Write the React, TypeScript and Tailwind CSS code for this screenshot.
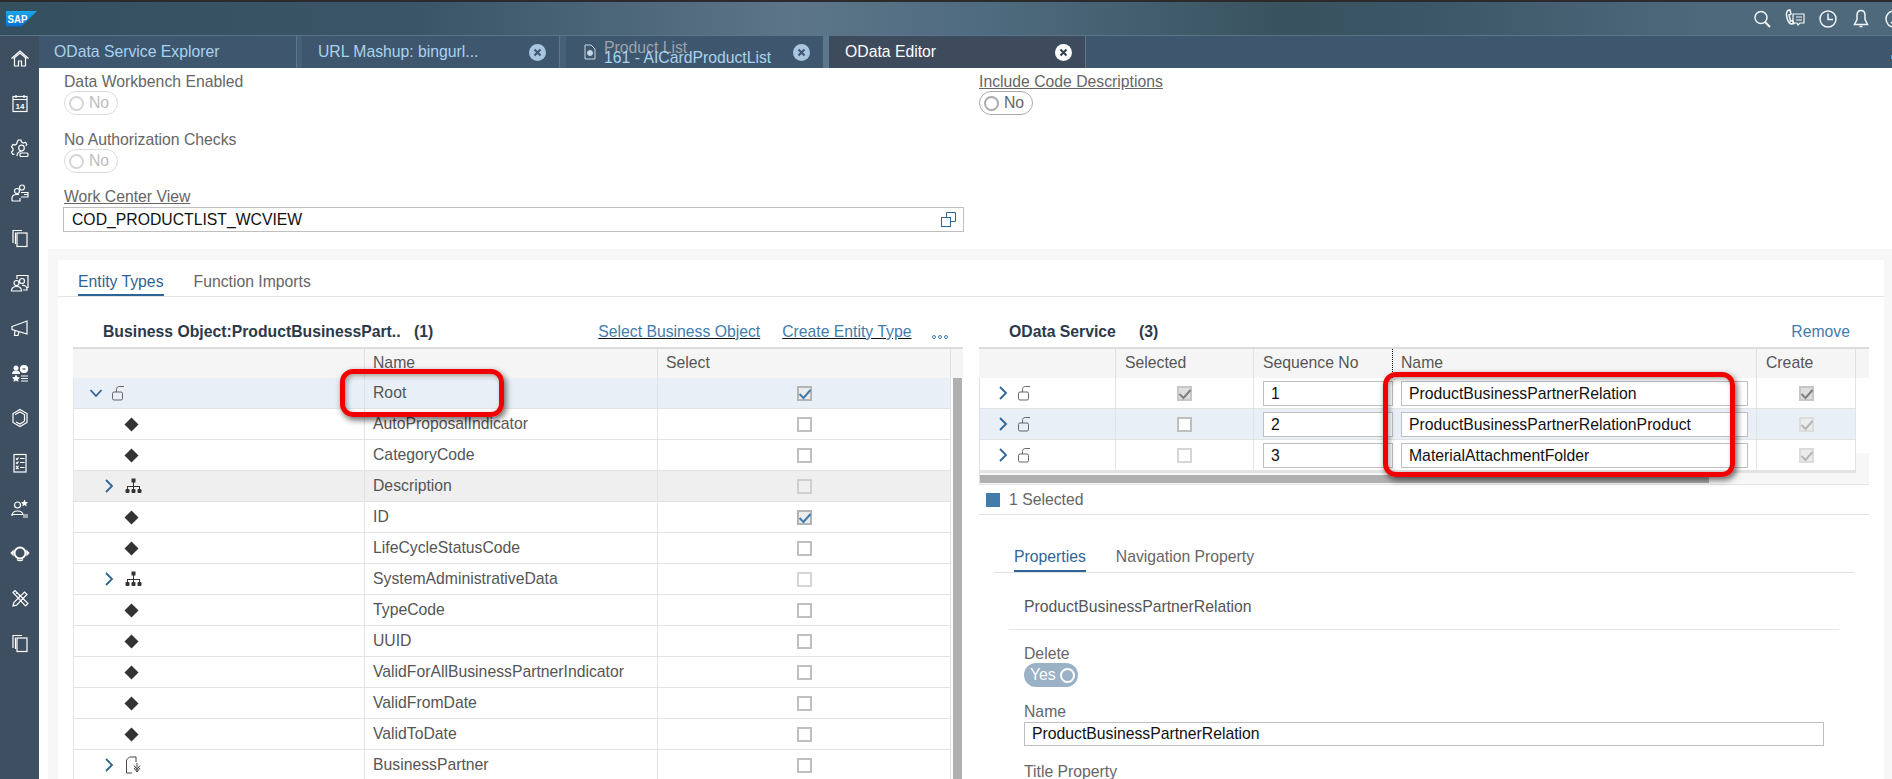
import type { ReactNode } from 'react'

const railIcons: ReactNode[] = [
  <><path d="M1.500 10.500 10 3l8.500 7.500" /><path d="M3.500 10.500 10 5l6.500 5.500" /><path d="M4.500 10v8h4v-5h3v5h4v-8" /></>,
  <><rect x="3" y="3.500" width="14" height="15" /><path d="M3 6.500h14M6 2v3M14 2v3" /><text x="10" y="16" fontSize="8" fontWeight="700" textAnchor="middle" fill="white" stroke="none">14</text></>,
  <><path d="M8 2h3l.5 2 2 1 2-.7 1.300 2.200-1 1.300M4.500 16l-1.500.500-1.500-2.500 1.500-1.500v-2L1.500 9 3 6.500 5 7l1.500-1L8 2" /><circle cx="11.500" cy="10" r="2.800" /><path d="M7 18c0-3 2-4.500 4.500-4.500" /><rect x="10" y="15" width="8" height="3.500" rx="1" /></>,
  <><circle cx="12" cy="4.500" r="2.500" /><circle cx="7" cy="8" r="2.500" /><path d="M2 18v-3c0-2 2-3.500 5-3.500h2M2 18h8v-3M11 9.500h7v4.500h-7M14 11.500h4" /></>,
  <><path d="M3 15V2.500h9" /><path d="M5.500 16V4.500" /><rect x="7" y="5" width="10" height="13.500" /></>,
  <><path d="M7 6V2.500h11v12h-2" /><circle cx="12" cy="8" r="2.500" /><circle cx="6.500" cy="10" r="2.500" /><path d="M1.500 18c0-3 2-4.500 5-4.500s5 1.500 5 4.500zM12 12.500c3-.5 5 1 5 3.500v1h-4" /></>,
  <><path d="M2 8.500 17 3v13L2 11.500zM5 12.500l-.5 5H8l1-4" /></>,
  <><g fill="white" stroke="none"><circle cx="6" cy="5" r="2.500" /><path d="M2 11c0-2.500 1.500-3.500 4-3.500s4 1 4 3.500z" /><path d="m6 11.500 1.300 2.600 2.700.4-2 1.900.5 2.600L6 17.500l-2.500 1.500.5-2.600-2-1.900 2.700-.4z" /></g><circle cx="14" cy="6" r="3.500" fill="white" /><path d="M12.500 6h3" stroke="#3d4f60" /><path d="M11 13h7M11 15.500h7M11 18h7" /></>,
  <><path d="M10 1.500 17 5.500v9l-7 4-7-4v-9z" /><path d="M5 6.500 10 4l4.500 2.500v7M14 13.500l-4 2.500-4-2" /></>,
  <><rect x="4" y="1.500" width="12" height="17.500" /><path d="M6 5.500l1 1 1.500-2M10 5.500h4.500M6 9.500l1 1 1.500-2M10 9.500h4.500M6 13l2.500 3M8.500 13 6 16M10 14.500h4.500" /></>,
  <><circle cx="7.500" cy="7" r="3" /><path d="M2 18c0-3.500 2.500-5 5.500-5s5 1 5.500 3.500H2z" /><path d="m14.500 1.500 1.100 2.400 2.400.3-1.800 1.700.5 2.500-2.200-1.300-2.200 1.300.5-2.500L11 4.200l2.400-.3z" fill="white" stroke="none" /><path d="M13 17h5M13 19h5" /></>,
  <><circle cx="10" cy="10" r="5.500" strokeWidth="2" /><path d="M3 8v4l-1.800-2zM17 8v4l1.800-2z" fill="white" /><path d="M7 16.500c1.500 1.500 4.500 1.500 6 0" /></>,
  <><path d="m3 18 .8-3.500L14.500 4l2.500 2.500L6.500 17.200z" /><path d="M3 4.500 5 2.500 18 15.500l-2.500 2.500z" /><path d="M6 5.500 7 4.500M9 8.500l1-1M12 11.500l1-1" /></>,
  <><path d="M3 15V2.500h9" /><path d="M5.500 16V4.500" /><rect x="7" y="5" width="10" height="13.500" /></>,
]

function TopIcon({ children }: { children: ReactNode }) {
  return (
    <div className="w-[33px] flex justify-center">
      <svg width="22" height="22" viewBox="0 0 22 22" fill="none" stroke="#f2f5f7" strokeWidth="1.500">
        {children}
      </svg>
    </div>
  )
}

function CloseIcon({ active }: { active?: boolean }) {
  return (
    <svg width="17" height="17" viewBox="0 0 17 17" className="shrink-0">
      <circle cx="8.500" cy="8.500" r="8.500" fill={active ? '#ffffff' : '#a9c6e0'} />
      <path d="m5.500 5.500 6 6m0-6-6 6" stroke={active ? '#33404f' : '#3f566f'} strokeWidth="2" />
    </svg>
  )
}

function Chevron({ open }: { open?: boolean }) {
  return (
    <svg width="14" height="14" viewBox="0 0 14 14" fill="none" stroke="#2f6497" strokeWidth="1.800">
      {open ? <path d="m1.500 4 5.500 6 5.500-6" /> : <path d="m4 1 6 6-6 6" />}
    </svg>
  )
}

function OpenLock() {
  return (
    <svg width="13" height="15" viewBox="0 0 13 15" fill="none" stroke="#555" strokeWidth="0.900">
      <rect x="0.500" y="6" width="10" height="8" rx="1.500" />
      <path d="M4.500 6V3.500C4.500 1.500 5.500.5 7.500.5h4.500" />
    </svg>
  )
}

function Diamond() {
  return (
    <svg width="15" height="15" viewBox="0 0 15 15">
      <path d="M7.500.5 14.500 7.500l-7 7-7-7z" fill="#333" />
    </svg>
  )
}

function Hierarchy() {
  return (
    <svg width="17" height="16" viewBox="0 0 17 16" fill="#333">
      <rect x="6.500" y="0.500" width="4" height="4" />
      <path d="M8 4h1v4h6v3h-1V9H9v2H8V9H3v2H2V8h6z" />
      <rect x="0.500" y="11" width="4" height="4" rx="1" />
      <rect x="6.500" y="11" width="4" height="4" rx="1" />
      <rect x="12.500" y="11" width="4" height="4" rx="1" />
    </svg>
  )
}

function DocDown() {
  return (
    <svg width="17" height="18" viewBox="0 0 17 18" fill="none" stroke="#444" strokeWidth="1">
      <path d="M7 17H1.500V4L4.500 1H11v5" />
      <path d="M12 7v9M9 12l3 4 3-4M9 9.500l3 4 3-4" />
    </svg>
  )
}

type BoxState = 'on' | 'off' | 'locked' | 'faded' | 'empty' | 'blank'

function Box({ state }: { state: BoxState }) {
  const look: Record<BoxState, string> = {
    on: 'border-[#b4b4b4] bg-[#ececec]',
    off: 'border-[#bfbfbf] bg-white',
    locked: 'border-[#c6c6c6] bg-[#dedede]',
    faded: 'border-[#dcdcdc] bg-[#ececec]',
    empty: 'border-[#cfcfcf] bg-[#efefef]',
    blank: 'border-[#d6d6d6] bg-white',
  }
  const tick = state === 'on' ? '#427cac' : state === 'locked' ? '#7f7f7f' : state === 'faded' ? '#b5b5b5' : ''
  return (
    <div className={`relative w-[15px] h-[15px] border-2 ${look[state]}`}>
      {tick && (
        <svg width="14" height="14" viewBox="0 0 14 14" fill="none" stroke={tick} strokeWidth="2" className="absolute left-[-1px] top-[-1px]">
          <path d="m1.500 7 4 4 7-8" />
        </svg>
      )}
    </div>
  )
}

function Toggle({ dim }: { dim?: boolean }) {
  return (
    <div className={`w-[54px] h-[24px] rounded-full border flex items-center gap-[5px] pl-[4px] ${dim ? 'border-[#dcdcdc] text-[#bdbdbd]' : 'border-[#ababab] text-[#666]'}`}>
      <div className={`w-[15px] h-[15px] rounded-full border-2 ${dim ? 'border-[#d4d4d4]' : 'border-[#ababab]'}`} />
      <span className="leading-none">No</span>
    </div>
  )
}

const entityRows: { name: string; kind: 'root' | 'leaf' | 'group' | 'doc'; box: BoxState }[] = [
  { name: 'Root', kind: 'root', box: 'on' },
  { name: 'AutoProposalIndicator', kind: 'leaf', box: 'off' },
  { name: 'CategoryCode', kind: 'leaf', box: 'off' },
  { name: 'Description', kind: 'group', box: 'empty' },
  { name: 'ID', kind: 'leaf', box: 'on' },
  { name: 'LifeCycleStatusCode', kind: 'leaf', box: 'off' },
  { name: 'SystemAdministrativeData', kind: 'group', box: 'blank' },
  { name: 'TypeCode', kind: 'leaf', box: 'off' },
  { name: 'UUID', kind: 'leaf', box: 'off' },
  { name: 'ValidForAllBusinessPartnerIndicator', kind: 'leaf', box: 'off' },
  { name: 'ValidFromDate', kind: 'leaf', box: 'off' },
  { name: 'ValidToDate', kind: 'leaf', box: 'off' },
  { name: 'BusinessPartner', kind: 'doc', box: 'off' },
]

const serviceRows: { seq: string; name: string; selected: BoxState; create: BoxState }[] = [
  { seq: '1', name: 'ProductBusinessPartnerRelation', selected: 'locked', create: 'locked' },
  { seq: '2', name: 'ProductBusinessPartnerRelationProduct', selected: 'off', create: 'faded' },
  { seq: '3', name: 'MaterialAttachmentFolder', selected: 'blank', create: 'faded' },
]

function EntityIcon({ kind }: { kind: string }) {
  if (kind === 'root') {
    return (
      <div className="flex items-center pl-[15px] gap-[9px]">
        <Chevron open />
        <OpenLock />
      </div>
    )
  }
  if (kind === 'leaf') {
    return <div className="pl-[50px] flex items-center"><Diamond /></div>
  }
  return (
    <div className="flex items-center pl-[28px] gap-[9px]">
      <Chevron />
      {kind === 'group' ? <Hierarchy /> : <DocDown />}
    </div>
  )
}

function App() {
  return (
    <div className="relative w-[1892px] h-[779px] overflow-hidden flex flex-col bg-white font-['Liberation_Sans',Arial,sans-serif] text-[15.75px]">
      <div className="h-[2px] bg-[#2b2b2b]" />
      <header className="h-[34px] flex items-center border-b border-[#587589] bg-[linear-gradient(90deg,#34505f_0%,#3b5568_22%,#5c7589_42%,#4f6b7f_52%,#38525f_68%,#3b5667_75%,#4f697c_90%,#4f697c_100%)]">
        <svg width="31" height="16" viewBox="0 0 31 16" className="ml-[6px] mt-[1px]">
          <defs>
            <linearGradient id="sapBlue" x1="0" y1="0" x2="0" y2="1">
              <stop offset="0" stopColor="#19a7ea" />
              <stop offset="1" stopColor="#0a6ed1" />
            </linearGradient>
          </defs>
          <path d="M0 0h31L15.500 15.500H0z" fill="url(#sapBlue)" />
          <text x="1.500" y="12" fontSize="11.500" fontWeight="700" fill="white" textLength="20" lengthAdjust="spacingAndGlyphs">SAP</text>
        </svg>
        <div className="ml-auto flex items-center -mr-[18px]">
          <TopIcon><circle cx="10" cy="9.500" r="6" /><path d="m14 14 5 5" strokeWidth="2" /></TopIcon>
          <TopIcon><path d="M5 2c-3 1-3 4-2 8s3 6 5 6l2-.5-1.500-3-2 .5L5 7l2-1-1-4z" /><path d="M9 6h11v9h-4l-2 2-1-2H9zM12 9h6M12 12h6" strokeWidth="1.200" /></TopIcon>
          <TopIcon><circle cx="11" cy="11" r="8" /><path d="M11 5.500V11.500h5" /></TopIcon>
          <TopIcon><path d="M11 2.500c-3 0-4 2.500-4 5v4L4.500 16.500h13L15 11.500v-4c0-2.500-1-5-4-5zM9.500 18.500h3" /></TopIcon>
          <TopIcon><circle cx="11" cy="11" r="8" /><path d="M8 14l2 2 5-5" /></TopIcon>
        </div>
      </header>

      <div className="flex-1 flex min-h-0">
        <nav className="w-[39px] shrink-0 bg-[#3d4f60] flex flex-col">
          <div className="-mt-px">
            {railIcons.map((icon, i) => (
              <div key={i} className="h-[45px] flex items-center justify-center">
                <svg width="20" height="20" viewBox="0 0 20 20" fill="none" stroke="white" strokeWidth="1.200">
                  {icon}
                </svg>
              </div>
            ))}
          </div>
        </nav>

        <main className="flex-1 min-w-0 flex flex-col">
          <div className="h-[32px] shrink-0 flex bg-[#3f566f]">
            <div className="w-[257px] pl-[15px] flex items-center text-[#a9d3ec]">OData Service Explorer</div>
            <div className="w-[6px] bg-[#47607a] border-l border-[#5d778e]" />
            <div className="w-[257px] pl-[16px] pr-[13px] flex items-center justify-between text-[#a9d3ec]">
              <span>URL Mashup: bingurl...</span>
              <CloseIcon />
            </div>
            <div className="w-[7px] bg-[#47607a] border-l border-[#5d778e]" />
            <div className="w-[257px] pl-[18px] pr-[13px] flex items-center">
              <svg width="12" height="16" viewBox="0 0 12 16" className="shrink-0" fill="none" stroke="#c9d6e2">
                <path d="M1 1h6l4 4v10H1z" />
                <circle cx="6" cy="9" r="2.500" fill="#c9d6e2" />
              </svg>
              <div className="ml-[8px] flex flex-col leading-[10px] pt-[2px]">
                <span className="text-[#9aa5ae]">Product List</span>
                <span className="text-[#a9d3ec]">161 - AICardProductList</span>
              </div>
              <div className="ml-auto"><CloseIcon /></div>
            </div>
            <div className="w-[6px] bg-[#5d778e]" />
            <div className="w-[257px] pl-[16px] pr-[13px] flex items-center justify-between bg-[#3d4b5d] border-r border-[#5d778e] text-white">
              <span>OData Editor</span>
              <CloseIcon active />
            </div>
            <div className="ml-auto w-[1px] h-[4px] mt-[19px] bg-[#4aa3ec]" />
          </div>

          <section className="h-[181px] shrink-0 pl-[25px] pt-[4px] flex gap-[15px] text-[#666]">
            <div className="w-[900px]">
              <div className="h-[19px] leading-[19px]">Data Workbench Enabled</div>
              <Toggle dim />
              <div className="h-[19px] leading-[19px] mt-[15px]">No Authorization Checks</div>
              <Toggle dim />
              <div className="h-[19px] leading-[19px] mt-[14px] underline">Work Center View</div>
              <div className="mt-[1px] -ml-px h-[25px] border border-[#bfbfbf] pl-[8px] pr-[7px] flex items-center justify-between text-[#111]">
                <span>COD_PRODUCTLIST_WCVIEW</span>
                <svg width="15" height="15" viewBox="0 0 15 15" fill="none" stroke="#2f6497" strokeWidth="1">
                  <rect x="0.500" y="5.500" width="9" height="9" />
                  <path d="M5.500 5V.5h9v9H10" />
                </svg>
              </div>
            </div>
            <div>
              <div className="h-[19px] leading-[19px] underline">Include Code Descriptions</div>
              <Toggle />
            </div>
          </section>

          <section className="flex-1 min-h-0 ml-[9px] pl-[10px] pr-[8px] pt-[11px] bg-[#f7f7f7]">
            <div className="h-full bg-white">
              <div className="h-[37px] pl-[20px] flex gap-[30px] border-b border-[#e5e5e5]">
                <div className="h-[36px] pt-[12px] leading-[20px] border-b-2 border-[#2f6497] text-[#2f6497]">Entity Types</div>
                <div className="pt-[12px] leading-[20px] text-[#666]">Function Imports</div>
              </div>

              <div className="pl-[15px] flex gap-[16px]">
                <div className="w-[890px] shrink-0">
                  <div className="h-[50px] flex items-end pb-[5px] pl-[30px] leading-[20px]">
                    <b className="w-[311px] text-[#2b3a4a]">Business Object:ProductBusinessPart..</b>
                    <b className="text-[#2b3a4a]">(1)</b>
                    <a className="ml-[165px] text-[#427cac] underline decoration-[#111]">Select Business Object</a>
                    <a className="ml-[22px] text-[#427cac] underline decoration-[#111]">Create Entity Type</a>
                    <span className="ml-[21px] mb-[3px] flex gap-[2px]">
                      <i className="w-[4px] h-[4px] rounded-full border border-[#427cac]" />
                      <i className="w-[4px] h-[4px] rounded-full border border-[#427cac]" />
                      <i className="w-[4px] h-[4px] rounded-full border border-[#427cac]" />
                    </span>
                  </div>
                  <div className="h-[31px] grid grid-cols-[292px_293px_293px_12px] border-t-2 border-[#dcdcdc] bg-[#f5f5f5] text-[#555] leading-[27px]">
                    <div className="border-r border-[#e0e0e0]" />
                    <div className="border-r border-[#e0e0e0] pl-[8px]">Name</div>
                    <div className="border-r border-[#e0e0e0] pl-[8px]">Select</div>
                    <div />
                  </div>
                  <div className="flex border-l border-[#e5e5e5]">
                    <div className="w-[877px]">
                      {entityRows.map(row => (
                        <div
                          key={row.name}
                          className={`h-[31px] grid grid-cols-[291px_293px_293px] border-b border-[#e3e3e3] text-[#555] ${row.kind === 'root' ? 'bg-[#e8eff6]' : row.name === 'Description' ? 'bg-[#efefef]' : ''}`}
                        >
                          <div className="border-r border-[#e3e3e3] flex items-center"><EntityIcon kind={row.kind} /></div>
                          <div className="border-r border-[#e3e3e3] pl-[8px] flex items-center">{row.name}</div>
                          <div className="border-r border-[#e3e3e3] flex items-center justify-center"><Box state={row.box} /></div>
                        </div>
                      ))}
                    </div>
                    <div className="ml-[2px] w-[9px] bg-[#b0b0b0]" />
                  </div>
                </div>

                <div className="w-[890px] shrink-0">
                  <div className="h-[50px] flex items-end pb-[5px] pl-[30px] leading-[20px]">
                    <b className="w-[130px] text-[#2b3a4a]">OData Service</b>
                    <b className="text-[#2b3a4a]">(3)</b>
                    <a className="ml-auto mr-[19px] text-[#427cac]">Remove</a>
                  </div>
                  <div className="h-[31px] grid grid-cols-[137px_138px_139px_364px_99px_13px] border-t-2 border-[#dcdcdc] bg-[#f5f5f5] text-[#555] leading-[27px]">
                    <div className="border-r border-[#e0e0e0]" />
                    <div className="border-r border-[#e0e0e0] pl-[9px]">Selected</div>
                    <div className="border-r border-dotted border-[#111] pl-[9px]">Sequence No</div>
                    <div className="border-r border-[#e0e0e0] pl-[8px]">Name</div>
                    <div className="border-r border-[#e0e0e0] pl-[9px]">Create</div>
                    <div />
                  </div>
                  <div className="flex">
                    <div className="w-[877px] border-l border-[#e0e0e0]">
                      {serviceRows.map((row, i) => (
                        <div
                          key={row.seq}
                          className={`h-[31px] grid grid-cols-[136px_138px_139px_364px_99px] border-b border-[#e3e3e3] text-[#111] ${i === 1 ? 'bg-[#e8eff6]' : ''}`}
                        >
                          <div className="border-r border-[#e3e3e3] pl-[16px] flex items-center gap-[8px]">
                            <Chevron />
                            <OpenLock />
                          </div>
                          <div className="border-r border-[#e3e3e3] flex items-center justify-center"><Box state={row.selected} /></div>
                          <div className="pl-[9px] pt-[3px]">
                            <div className="w-full h-[25px] border border-[#bfbfbf] bg-white pl-[7px] leading-[23px]">{row.seq}</div>
                          </div>
                          <div className="pl-[8px] pr-[8px] pt-[3px] border-r border-[#e3e3e3]">
                            <div className="w-full h-[25px] border border-[#bfbfbf] bg-white pl-[7px] leading-[23px]">{row.name}</div>
                          </div>
                          <div className="border-r border-[#e3e3e3] flex items-center justify-center"><Box state={row.create} /></div>
                        </div>
                      ))}
                      <div className="h-[13px] pt-[2px] bg-[#f7f7f7] border-t-2 border-[#e3e3e3]">
                        <div className="w-[729px] h-[8px] bg-[#b0b0b0]" />
                      </div>
                    </div>
                    <div className="flex-1 flex flex-col">
                      <div className="h-[75px]" />
                      <div className="flex-1 bg-[#f7f7f7]" />
                    </div>
                  </div>
                  <div className="h-[31px] flex items-center border-y border-[#e5e5e5] pl-[7px] gap-[9px] text-[#666]">
                    <div className="w-[14px] h-[14px] bg-[#427cac]" />
                    <span>1 Selected</span>
                  </div>

                  <div className="mx-[15px] h-[58px] flex gap-[30px] pl-[20px] border-b border-[#e0e0e0]">
                    <div className="h-[57px] pt-[32px] leading-[20px] border-b-2 border-[#2f6497] text-[#2f6497]">Properties</div>
                    <div className="pt-[32px] leading-[20px] text-[#666]">Navigation Property</div>
                  </div>
                  <div className="mx-[30px] h-[57px] pl-[15px] border-b border-[#e5e5e5] pt-[24px] leading-[20px] text-[#555]">ProductBusinessPartnerRelation</div>
                  <div className="pl-[45px] text-[#666]">
                    <div className="h-[33px] pt-[14px] leading-[19px]">Delete</div>
                    <div className="w-[54px] h-[24px] rounded-full bg-[#9ab1c6] flex items-center pl-[6px] gap-[4px] text-white">
                      <span className="leading-none">Yes</span>
                      <div className="w-[15px] h-[15px] rounded-full border-2 border-white" />
                    </div>
                    <div className="h-[35px] pt-[15px] leading-[20px]">Name</div>
                    <div className="w-[800px] h-[24px] border border-[#bfbfbf] pl-[7px] leading-[22px] text-[#111]">ProductBusinessPartnerRelation</div>
                    <div className="mt-[16px] leading-[20px]">Title Property</div>
                  </div>
                </div>
              </div>
            </div>
          </section>
        </main>
      </div>

      <div className="absolute left-[340px] top-[369px] w-[164px] h-[48px] rounded-[13px] border-[5px] border-[#f00000] shadow-[2px_3px_6px_rgba(0,0,0,0.6),inset_2px_2px_5px_rgba(0,0,0,0.35)]" />
      <div className="absolute left-[1383px] top-[372px] w-[352px] h-[105px] rounded-[13px] border-[5px] border-[#f00000] shadow-[2px_3px_6px_rgba(0,0,0,0.6),inset_2px_2px_5px_rgba(0,0,0,0.35)]" />
    </div>
  )
}

export default App
